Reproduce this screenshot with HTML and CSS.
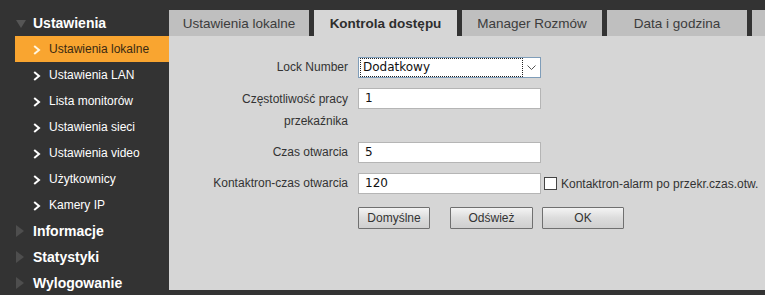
FILE: index.html
```html
<!DOCTYPE html>
<html>
<head>
<meta charset="utf-8">
<link rel="stylesheet" href="styles.css">
</head>
<body>
<div class="page">
  <nav class="sidebar">
    <div class="group-head open"><span class="tri-down"></span>Ustawienia</div>
    <div class="item active"><svg class="chev" width="8" height="10" viewBox="0 0 8 10"><path d="M1.2 1 L6 5 L1.2 9" fill="none" stroke="#fff6e0" stroke-width="2"/></svg>Ustawienia lokalne</div>
    <div class="item"><svg class="chev" width="8" height="10" viewBox="0 0 8 10"><path d="M1.2 1 L6 5 L1.2 9" fill="none" stroke="#fff" stroke-width="2"/></svg>Ustawienia LAN</div>
    <div class="item"><svg class="chev" width="8" height="10" viewBox="0 0 8 10"><path d="M1.2 1 L6 5 L1.2 9" fill="none" stroke="#fff" stroke-width="2"/></svg>Lista monitorów</div>
    <div class="item"><svg class="chev" width="8" height="10" viewBox="0 0 8 10"><path d="M1.2 1 L6 5 L1.2 9" fill="none" stroke="#fff" stroke-width="2"/></svg>Ustawienia sieci</div>
    <div class="item"><svg class="chev" width="8" height="10" viewBox="0 0 8 10"><path d="M1.2 1 L6 5 L1.2 9" fill="none" stroke="#fff" stroke-width="2"/></svg>Ustawienia video</div>
    <div class="item"><svg class="chev" width="8" height="10" viewBox="0 0 8 10"><path d="M1.2 1 L6 5 L1.2 9" fill="none" stroke="#fff" stroke-width="2"/></svg>Użytkownicy</div>
    <div class="item"><svg class="chev" width="8" height="10" viewBox="0 0 8 10"><path d="M1.2 1 L6 5 L1.2 9" fill="none" stroke="#fff" stroke-width="2"/></svg>Kamery IP</div>
    <div class="group-head"><span class="tri-right"></span>Informacje</div>
    <div class="group-head"><span class="tri-right"></span>Statystyki</div>
    <div class="group-head"><span class="tri-right"></span>Wylogowanie</div>
  </nav>
  <main class="main">
    <div class="tabs">
      <div class="tab">Ustawienia lokalne</div>
      <div class="tab active">Kontrola dostępu</div>
      <div class="tab">Manager Rozmów</div>
      <div class="tab">Data i godzina</div>
      <div class="tab"></div>
    </div>
    <div class="content">
      <div class="form">
        <div class="label single">Lock Number</div>
        <div class="select">
          <span class="sel-text"><span class="focus">Dodatkowy</span></span>
          <span class="sel-arrow"><svg width="9" height="6" viewBox="0 0 9 6"><path d="M0.5 0.5 L4.5 4.5 L8.5 0.5" fill="none" stroke="#555" stroke-width="1"/></svg></span>
        </div>
        <div></div>

        <div class="label">Częstotliwość pracy przekaźnika</div>
        <div class="input">1</div>
        <div></div>

        <div class="label single">Czas otwarcia</div>
        <div class="input">5</div>
        <div></div>

        <div class="label single">Kontaktron-czas otwarcia</div>
        <div class="input">120</div>
        <div class="check"><span class="box"></span>Kontaktron-alarm po przekr.czas.otw.</div>

        <div></div>
        <div class="buttons">
          <button class="btn b1">Domyślne</button>
          <button class="btn b2">Odśwież</button>
          <button class="btn b3">OK</button>
        </div>
      </div>
    </div>
  </main>
</div>
</body>
</html>
```
FILE: styles.css
```css
* { box-sizing: border-box; }
html, body { margin: 0; padding: 0; }
body {
  background: #333333;
  font-family: "Liberation Sans", Arial, sans-serif;
  width: 765px;
  height: 295px;
  overflow: hidden;
}
.page {
  display: flex;
  padding-top: 10px;
  height: 295px;
}
.sidebar {
  width: 169px;
  flex: none;
}
.group-head {
  height: 26px;
  display: flex;
  align-items: center;
  color: #ffffff;
  font-weight: bold;
  font-size: 14px;
  padding-left: 16px;
}
.tri-down {
  width: 0; height: 0;
  border-left: 5px solid transparent;
  border-right: 5px solid transparent;
  border-top: 8px solid #555555;
  margin-right: 7px;
  margin-top: 2px;
}
.tri-right {
  width: 0; height: 0;
  border-top: 6px solid transparent;
  border-bottom: 6px solid transparent;
  border-left: 8px solid #4e4e4e;
  margin-right: 9px;
}
.item {
  height: 26px;
  margin-left: 15px;
  display: flex;
  align-items: center;
  color: #ffffff;
  font-size: 12px;
  padding-left: 18px;
}
.item.active {
  background: #f9a530;
  color: #3a2a12;
}
.chev {
  flex: none;
  margin-right: 8px;
  margin-top: 1px;
}
.main {
  flex: 1;
  display: flex;
  flex-direction: column;
  height: 280px;
  overflow: hidden;
}
.tabs {
  display: flex;
  gap: 5px;
  height: 26px;
  flex: none;
}
.tab {
  width: 140px;
  flex: none;
  background: #bfbfbf;
  color: #3c3c3c;
  font-size: 13.5px;
  display: flex;
  align-items: center;
  justify-content: center;
  padding-top: 1px;
}
.tab.active {
  background: #d6d6d6;
  font-weight: bold;
  color: #2e2e2e;
  width: 143px;
}
.content {
  flex: 1;
  background: #d6d6d6;
  padding-top: 21px;
  padding-left: 39px;
}
.form {
  display: grid;
  grid-template-columns: 140px 183px auto;
  column-gap: 10px;
  row-gap: 10px;
  align-items: start;
}
.label {
  font-size: 12px;
  color: #333333;
  text-align: right;
  line-height: 22px;
}
.label.single { line-height: 21px; white-space: nowrap; }
.input, .select {
  height: 21px;
  background: #ffffff;
  border: 1px solid #b5b5b5;
  font-family: "DejaVu Sans", Verdana, sans-serif;
  font-size: 12px;
  color: #111;
  padding-left: 6px;
  line-height: 19px;
}
.select {
  border-color: #7f9db9;
  display: flex;
  padding-left: 2px;
}
.sel-text { flex: 1; padding-top: 1px; }
.focus {
  display: block;
  width: 161px;
  height: 17px;
  line-height: 16px;
  outline: 1px dotted #222;
  padding-left: 2px;
}
.sel-arrow {
  width: 18px;
  display: flex;
  align-items: center;
  justify-content: center;
}
.check {
  margin-left: -7px;
  display: flex;
  align-items: center;
  height: 21px;
  font-size: 12px;
  color: #333333;
  white-space: nowrap;
}
.box {
  width: 13px; height: 13px;
  border: 1px solid #444;
  background: #fff;
  margin-right: 4px;
}
.buttons {
  grid-column: 2 / 4;
  display: flex;
  margin-top: 3px;
  white-space: nowrap;
}
.btn {
  flex: none;
  height: 22px;
  border: 1px solid #707070;
  background: linear-gradient(#f4f4f4, #dcdcdc 50%, #cfcfcf);
  font-family: "Liberation Sans", Arial, sans-serif;
  font-size: 12px;
  color: #333;
  padding: 0;
  border-radius: 1px;
}
.b1 { width: 72px; }
.b2 { width: 83px; margin-left: 20px; }
.b3 { width: 82px; margin-left: 9px; }
```
